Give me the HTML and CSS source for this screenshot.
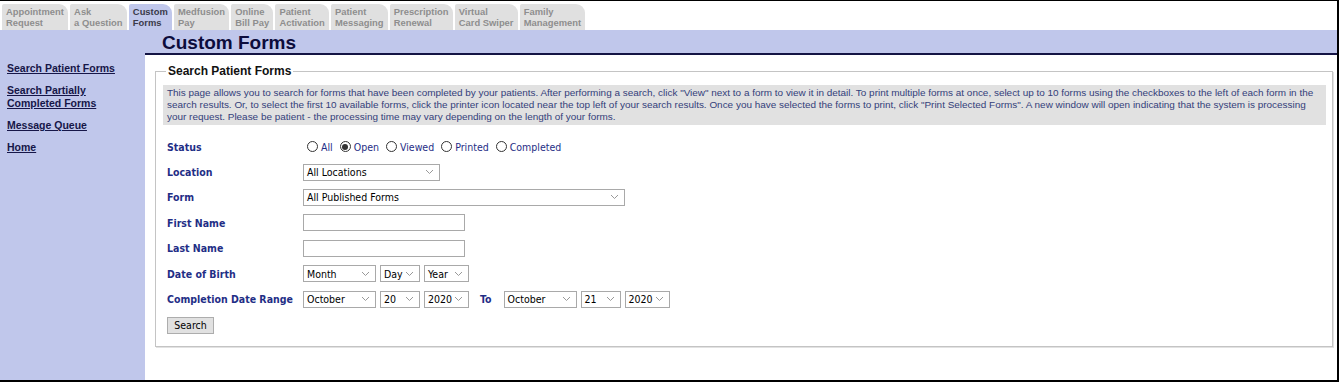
FILE: index.html
```html
<!DOCTYPE html>
<html>
<head>
<meta charset="utf-8">
<link rel="stylesheet" href="styles.css">
</head>
<body>
<div class="page">
  <div class="tabs">
    <div class="tab">Appointment<br>Request</div>
    <div class="tab">Ask<br>a Question</div>
    <div class="tab active">Custom<br>Forms</div>
    <div class="tab">Medfusion<br>Pay</div>
    <div class="tab">Online<br>Bill Pay</div>
    <div class="tab">Patient<br>Activation</div>
    <div class="tab">Patient<br>Messaging</div>
    <div class="tab">Prescription<br>Renewal</div>
    <div class="tab">Virtual<br>Card Swiper</div>
    <div class="tab">Family<br>Management</div>
  </div>
  <div class="band"><h1 class="title">Custom Forms</h1></div>
  <div class="layout">
    <nav class="sidebar">
      <a class="navlink" href="#">Search Patient Forms</a>
      <a class="navlink" href="#">Search Partially<br>Completed Forms</a>
      <a class="navlink" href="#">Message Queue</a>
      <a class="navlink" href="#">Home</a>
    </nav>
    <main class="main">
      <fieldset class="panel">
        <legend class="legend">Search Patient Forms</legend>
        <div class="info">This page allows you to search for forms that have been completed by your patients. After performing a search, click "View" next to a form to view it in detail. To print multiple forms at once, select up to 10 forms using the checkboxes to the left of each form in the<br>search results. Or, to select the first 10 available forms, click the printer icon located near the top left of your search results. Once you have selected the forms to print, click "Print Selected Forms". A new window will open indicating that the system is processing<br>your request. Please be patient - the processing time may vary depending on the length of your forms.</div>
        <div class="grid">
          <div class="label">Status</div>
          <div class="field radios">
            <span class="radio"></span><span class="rtext">All</span>
            <span class="radio checked"></span><span class="rtext">Open</span>
            <span class="radio"></span><span class="rtext">Viewed</span>
            <span class="radio"></span><span class="rtext">Printed</span>
            <span class="radio"></span><span class="rtext">Completed</span>
          </div>

          <div class="label">Location</div>
          <div class="field">
            <div class="select w-loc"><span>All Locations</span><svg class="chev" width="9" height="6" viewBox="0 0 9 6"><path d="M1 1 L4.5 4.5 L8 1" fill="none" stroke="#999" stroke-width="1"/></svg></div>
          </div>

          <div class="label">Form</div>
          <div class="field">
            <div class="select w-form"><span>All Published Forms</span><svg class="chev" width="9" height="6" viewBox="0 0 9 6"><path d="M1 1 L4.5 4.5 L8 1" fill="none" stroke="#999" stroke-width="1"/></svg></div>
          </div>

          <div class="label">First Name</div>
          <div class="field"><div class="input"></div></div>

          <div class="label">Last Name</div>
          <div class="field"><div class="input"></div></div>

          <div class="label">Date of Birth</div>
          <div class="field">
            <div class="select w-month"><span>Month</span><svg class="chev" width="9" height="6" viewBox="0 0 9 6"><path d="M1 1 L4.5 4.5 L8 1" fill="none" stroke="#999" stroke-width="1"/></svg></div>
            <div class="select w-day"><span>Day</span><svg class="chev" width="9" height="6" viewBox="0 0 9 6"><path d="M1 1 L4.5 4.5 L8 1" fill="none" stroke="#999" stroke-width="1"/></svg></div>
            <div class="select w-year"><span>Year</span><svg class="chev" width="9" height="6" viewBox="0 0 9 6"><path d="M1 1 L4.5 4.5 L8 1" fill="none" stroke="#999" stroke-width="1"/></svg></div>
          </div>

          <div class="label">Completion Date Range</div>
          <div class="field">
            <div class="select w-month"><span>October</span><svg class="chev" width="9" height="6" viewBox="0 0 9 6"><path d="M1 1 L4.5 4.5 L8 1" fill="none" stroke="#999" stroke-width="1"/></svg></div>
            <div class="select w-day"><span>20</span><svg class="chev" width="9" height="6" viewBox="0 0 9 6"><path d="M1 1 L4.5 4.5 L8 1" fill="none" stroke="#999" stroke-width="1"/></svg></div>
            <div class="select w-year"><span>2020</span><svg class="chev" width="9" height="6" viewBox="0 0 9 6"><path d="M1 1 L4.5 4.5 L8 1" fill="none" stroke="#999" stroke-width="1"/></svg></div>
            <span class="to">To</span>
            <div class="select w-month"><span>October</span><svg class="chev" width="9" height="6" viewBox="0 0 9 6"><path d="M1 1 L4.5 4.5 L8 1" fill="none" stroke="#999" stroke-width="1"/></svg></div>
            <div class="select w-day"><span>21</span><svg class="chev" width="9" height="6" viewBox="0 0 9 6"><path d="M1 1 L4.5 4.5 L8 1" fill="none" stroke="#999" stroke-width="1"/></svg></div>
            <div class="select w-year"><span>2020</span><svg class="chev" width="9" height="6" viewBox="0 0 9 6"><path d="M1 1 L4.5 4.5 L8 1" fill="none" stroke="#999" stroke-width="1"/></svg></div>
          </div>

          <div class="btnrow"><button class="button">Search</button></div>
        </div>
      </fieldset>
    </main>
  </div>
</div>
</body>
</html>
```
FILE: styles.css
```css
* { box-sizing: border-box; }
html, body { margin: 0; padding: 0; background: #fff; }
.page {
  width: 1339px;
  height: 382px;
  border-top: 1px solid #000;
  border-right: 2px solid #000;
  border-bottom: 2px solid #000;
  display: flex;
  flex-direction: column;
  overflow: hidden;
  font-family: "Liberation Sans", Arial, sans-serif;
}
.tabs {
  height: 29px;
  display: flex;
  align-items: flex-end;
  gap: 2px;
  padding-left: 2px;
}
.tab {
  height: 26px;
  background: #e0e0e0;
  color: #8e8e8e;
  font-weight: bold;
  font-size: 9.4px;
  line-height: 10.5px;
  padding: 3px 4.3px 0 4px;
  border-radius: 2px 9px 0 0;
  white-space: nowrap;
}
.tab.active { background: #c0c7eb; color: #3a3a4a; }
.band {
  height: 23px;
  background: #c0c7eb;
  padding-left: 162px;
}
.title {
  margin: 0;
  font-size: 19px;
  line-height: 25px;
  font-weight: bold;
  color: #0c0c3c;
}
.layout { flex: 1; display: flex; min-height: 0; }
.sidebar {
  width: 145px;
  background: #c0c7eb;
  display: flex;
  flex-direction: column;
  gap: 9px;
  padding: 9px 0 0 7px;
}
.navlink {
  color: #161648;
  font-size: 10.5px;
  font-weight: bold;
  line-height: 13px;
  text-decoration: underline;
}
.main {
  flex: 1;
  border-top: 2px solid #141444;
  padding: 9px 4px 0 10px;
}
.panel {
  margin: 0;
  border: 1px solid #c4c4c4;
  box-shadow: 1px 1px 0 #e2e2e2;
  padding: 0 6px 9px 7px;
  min-width: 0;
}
.legend {
  font-size: 12px;
  font-weight: bold;
  color: #111;
  padding: 0 2px;
  margin-left: 3px;
  line-height: 14px;
}
.info {
  background: #e1e1e1;
  color: #33407a;
  font-size: 9.95px;
  line-height: 12px;
  padding: 2px 4px 2px 4px;
  white-space: nowrap;
  margin-top: 7px;
}
.grid {
  display: grid;
  grid-template-columns: 140px 1fr;
  grid-auto-rows: 25.4px;
  margin-top: 9px;
  align-items: center;
}
.label {
  padding-left: 4px;
  font-family: "DejaVu Sans Condensed", "DejaVu Sans", sans-serif;
  font-weight: bold;
  font-size: 10.5px;
  color: #1f2e86;
}
.field { display: flex; align-items: center; gap: 4px; }
.radios { gap: 0; font-family: "DejaVu Sans Condensed", "DejaVu Sans", sans-serif; font-size: 10.5px; color: #1f2e86; padding-left: 4px; }
.radio {
  width: 11px; height: 11px;
  border: 1px solid #333;
  border-radius: 50%;
  display: inline-flex; align-items: center; justify-content: center;
  margin-right: 3px;
}
.radio.checked::after {
  content: "";
  width: 6px; height: 6px; border-radius: 50%; background: #333;
}
.rtext { margin-right: 7px; }
.select {
  height: 17px;
  border: 1px solid #a9a9a9;
  background: #fff;
  display: flex;
  align-items: center;
  justify-content: space-between;
  padding: 0 5px 0 3px;
  font-family: "DejaVu Sans Condensed", "DejaVu Sans", sans-serif;
  font-size: 10.5px;
  color: #000;
}
.w-loc { width: 137px; }
.w-form { width: 322px; }
.w-month { width: 73px; }
.w-day { width: 40px; }
.w-year { width: 45px; }
.input { width: 162px; height: 17px; border: 1px solid #a9a9a9; background: #fff; }
.to {
  font-family: "DejaVu Sans Condensed", "DejaVu Sans", sans-serif;
  font-weight: bold; font-size: 10.5px; color: #1f2e86;
  margin: 0 8px 0 7px;
}
.btnrow { grid-column: 1 / 3; padding-left: 4px; }
.button {
  width: 47px; height: 17px;
  background: #e1e1e1;
  border: 1px solid #adadad;
  font-family: "DejaVu Sans Condensed", "DejaVu Sans", sans-serif;
  font-size: 10.5px;
  color: #000;
  padding: 0;
}
```
